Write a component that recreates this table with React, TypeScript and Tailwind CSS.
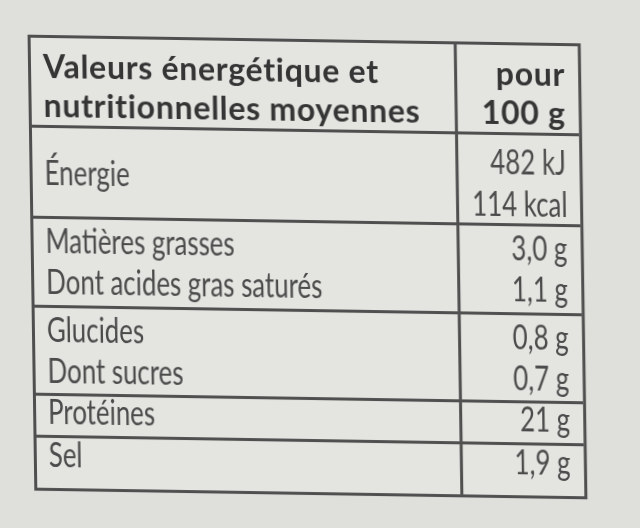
import React from 'react';

type Row = {
  labels: string[];
  values: string[];
  h: string;
  lead: string;
  center?: boolean;
  valuePad?: string;
};

const rows: Row[] = [
  { labels: ['Énergie'], values: ['482 kJ', '114 kcal'], h: 'h-[91px]', lead: 'leading-[42px]', center: true, valuePad: 'pt-[5px]' },
  { labels: ['Matières grasses', 'Dont acides gras saturés'], values: ['3,0 g', '1,1 g'], h: 'h-[89px]', lead: 'leading-[41px]' },
  { labels: ['Glucides', 'Dont sucres'], values: ['0,8 g', '0,7 g'], h: 'h-[88px]', lead: 'leading-[41px]' },
  { labels: ['Protéines'], values: ['21 g'], h: 'h-[42px]', lead: 'leading-[30px]' },
  { labels: ['Sel'], values: ['1,9 g'], h: 'h-[50px]', lead: 'leading-[32px]' },
];

export default function App() {
  return (
    <div className="w-[640px] h-[528px] bg-[#dfdfdc] pt-[39px] pl-[31px] overflow-hidden">
      {/* photographed label, slightly sheared by the camera angle */}
      <div className="w-[553px] border-[3px] border-[#4f4f4f] bg-[#e4e4e1] skew-x-[0.85deg] skew-y-[0.9deg] blur-[0.4px] font-['Lato',sans-serif]">
        {/* header */}
        <div className="flex h-[90px] border-b-[3px] border-[#4f4f4f]">
          <div className="w-[426px] shrink-0 border-r-[3px] border-[#4f4f4f] pl-[12px] pt-[8px] text-[32px] leading-[39px] tracking-[0.7px] font-bold text-[#353535]">
            <div className="whitespace-nowrap">Valeurs énergétique et</div>
            <div className="whitespace-nowrap">nutritionnelles moyennes</div>
          </div>
          <div className="flex-1 min-w-0 pr-[13px] pt-[8px] text-right text-[32px] leading-[39px] tracking-[0.7px] font-bold text-[#353535]">
            <div>pour</div>
            <div>100 g</div>
          </div>
        </div>

        {rows.map((r, i) => (
          <div
            key={i}
            className={`flex ${r.h} ${i < rows.length - 1 ? 'border-b-[3px] border-[#4f4f4f]' : ''}`}
          >
            <div
              className={`w-[426px] shrink-0 border-r-[3px] border-[#4f4f4f] pl-[12px] flex flex-col text-[34px] ${r.lead} text-[#4b4b4b] ${
                r.center ? 'justify-center' : ''
              }`}
            >
              {r.labels.map((l) => (
                <span key={l} className="inline-block origin-left scale-x-[0.76] whitespace-nowrap">
                  {l}
                </span>
              ))}
            </div>
            <div className={`flex-1 min-w-0 pr-[13px] flex flex-col items-end text-[34px] ${r.lead} text-[#4b4b4b] ${r.valuePad ?? ''}`}>
              {r.values.map((v) => (
                <span key={v} className="inline-block origin-right scale-x-[0.76] whitespace-nowrap">
                  {v}
                </span>
              ))}
            </div>
          </div>
        ))}
      </div>
    </div>
  );
}
